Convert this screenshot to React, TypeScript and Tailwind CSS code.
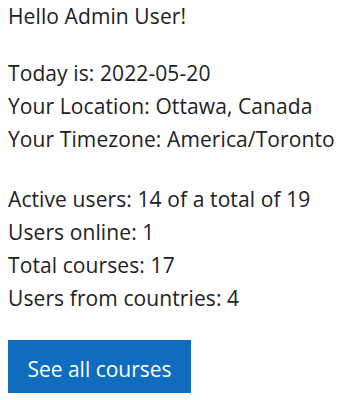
import React from "react";

export default function App() {
  return (
    <div
      className="bg-white w-[342px] h-[400px] pl-2 text-[#1d2125] text-[21px] leading-[33px] tracking-[0.1px]"
      style={{ fontFamily: '"Open Sans", "Noto Sans", sans-serif' }}
    >
      <p className="mb-6">Hello Admin User!</p>
      <p className="mb-[27px]">
        Today is: 2022-05-20
        <br />
        Your Location: Ottawa, Canada
        <br />
        Your Timezone: America/Toronto
      </p>
      <p className="mb-[25px]">
        Active users: 14 of a total of 19
        <br />
        Users online: 1
        <br />
        Total courses: 17
        <br />
        Users from countries: 4
      </p>
      <button className="bg-[#0f6cbf] text-white w-[183px] h-[53px] pt-[5px] flex items-center justify-center tracking-normal">
        See all courses
      </button>
    </div>
  );
}
